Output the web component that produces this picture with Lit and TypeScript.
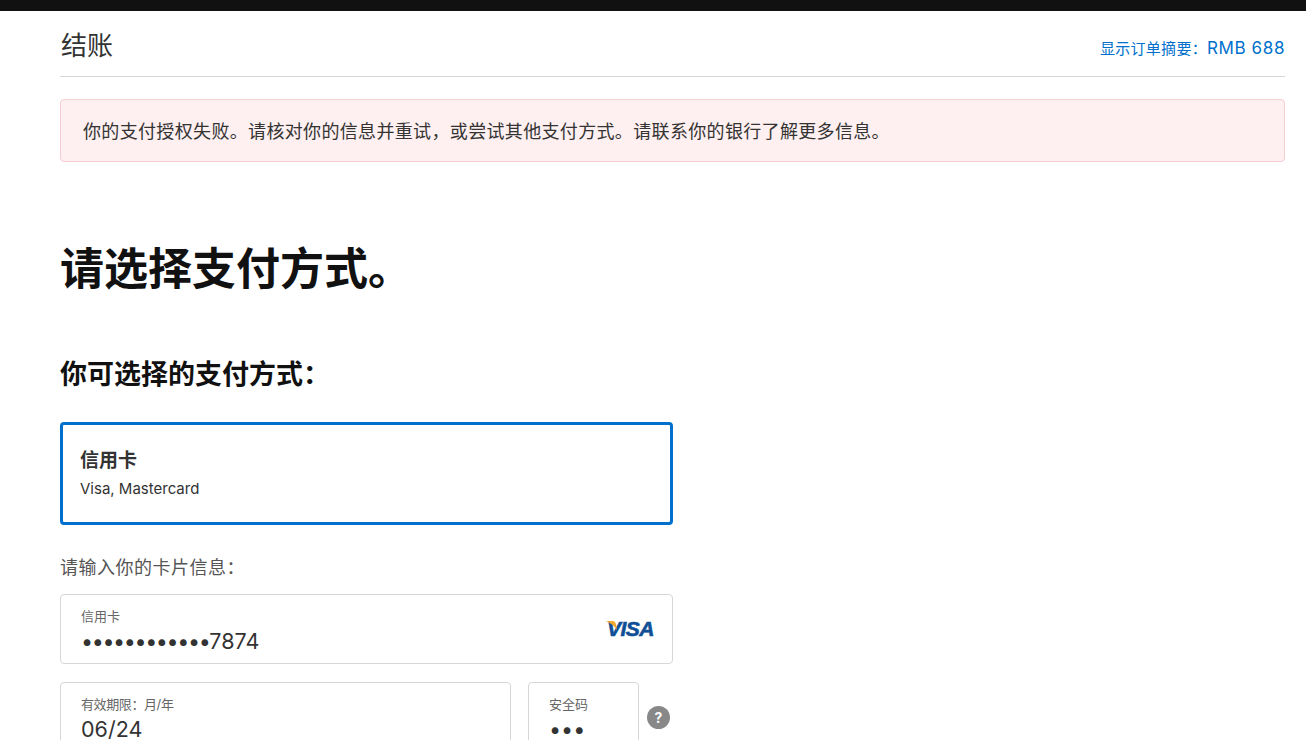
import { LitElement, html, css } from 'lit';
import { customElement } from 'lit/decorators.js';

@customElement('app-root')
export class AppRoot extends LitElement {
  static styles = css`
    :host {
      display: block;
      height: 740px;
      overflow: hidden;
      background: #fff;
      color: #333;
      font-family: Inter, 'Noto Sans CJK SC', sans-serif;
    }
    .topbar { height: 11px; background: #111; }
    .page { padding: 0 21px 0 60px; }
    .header {
      display: flex;
      justify-content: space-between;
      align-items: center;
      height: 65px;
      border-bottom: 1px solid #d6d6d6;
    }
    .title { font-size: 26px; line-height: 36px; padding: 4px 0 0 1px; }
    .summary { color: #0070cc; font-size: 15px; letter-spacing: 0.3px; padding-top: 7px; }
    .price { font-size: 17px; letter-spacing: 0.6px; }
    .alert {
      margin-top: 22px;
      height: 63px;
      box-sizing: border-box;
      padding: 0 22px 2px;
      display: flex;
      align-items: center;
      background: #feeff0;
      border: 1px solid #f5ced3;
      border-radius: 4px;
      font-size: 18px;
      letter-spacing: 0.34px;
    }
    h1 {
      margin: 77px 0 0;
      font-size: 44px;
      line-height: 60px;
      font-weight: 700;
      color: #111;
    }
    h2 {
      margin: 58px 0 0;
      font-size: 27px;
      line-height: 36px;
      font-weight: 700;
      color: #111;
    }
    .column { width: 613px; }
    .method {
      margin-top: 29px;
      box-sizing: border-box;
      height: 103px;
      padding: 24px 17px 0;
      border: 3px solid #0070cc;
      border-radius: 4px;
    }
    .method-name { font-size: 19px; font-weight: 700; line-height: 24px; }
    .method-note { font-size: 15px; line-height: 20px; margin-top: 6px; }
    .prompt { margin-top: 30px; font-size: 18px; letter-spacing: 0.5px; line-height: 26px; color: #555; }
    .field {
      box-sizing: border-box;
      height: 70px;
      padding: 12px 20px 0;
      border: 1px solid #d6d6d6;
      border-radius: 4px;
      position: relative;
    }
    .field label { display: block; font-size: 13px; line-height: 18px; color: #666; }
    .expiry label { letter-spacing: -0.4px; }
    .value { font-size: 21.5px; line-height: 28px; margin-top: 2px; }
    .dots { letter-spacing: -1.4px; }
    .card { margin-top: 13px; }
    .row { display: flex; align-items: flex-start; margin-top: 18px; }
    .expiry { width: 451px; }
    .cvv { width: 111px; margin-left: 17px; }
    .help {
      margin: 24px 0 0 8px;
      width: 23px;
      height: 23px;
      border-radius: 50%;
      background: #888;
      color: #fff;
      font-size: 14px;
      font-weight: 700;
      text-align: center;
      line-height: 23px;
    }
    .visa {
      position: absolute;
      right: 18px;
      top: 22px;
      font: italic 700 21px/24px 'Liberation Sans', sans-serif;
      color: #0f4f96;
      letter-spacing: -0.5px;
      -webkit-text-stroke: 0.6px #0f4f96;
    }
    .visa svg { position: absolute; left: -1px; top: 4px; }
  `;

  render() {
    return html`
      <div class="topbar"></div>
      <div class="page">
        <div class="header">
          <div class="title">结账</div>
          <div class="summary">显示订单摘要：<span class="price">RMB 688</span></div>
        </div>
        <div class="alert">你的支付授权失败。请核对你的信息并重试，或尝试其他支付方式。请联系你的银行了解更多信息。</div>
        <h1>请选择支付方式。</h1>
        <h2>你可选择的支付方式：</h2>
        <div class="column">
          <div class="method">
            <div class="method-name">信用卡</div>
            <div class="method-note">Visa, Mastercard</div>
          </div>
          <div class="prompt">请输入你的卡片信息：</div>
          <div class="field card">
            <label>信用卡</label>
            <div class="value"><span class="dots">••••••••••••</span>7874</div>
            <div class="visa">
              <svg width="11" height="9" viewBox="0 0 11 9"><path d="M0 0h7q2 0 3 3l1 6Q7 3 0 0z" fill="#f2a72e"/></svg>
              VISA
            </div>
          </div>
          <div class="row">
            <div class="field expiry">
              <label>有效期限：月/年</label>
              <div class="value">06/24</div>
            </div>
            <div class="field cvv">
              <label>安全码</label>
              <div class="value">•••</div>
            </div>
            <div class="help">?</div>
          </div>
        </div>
      </div>
    `;
  }
}
